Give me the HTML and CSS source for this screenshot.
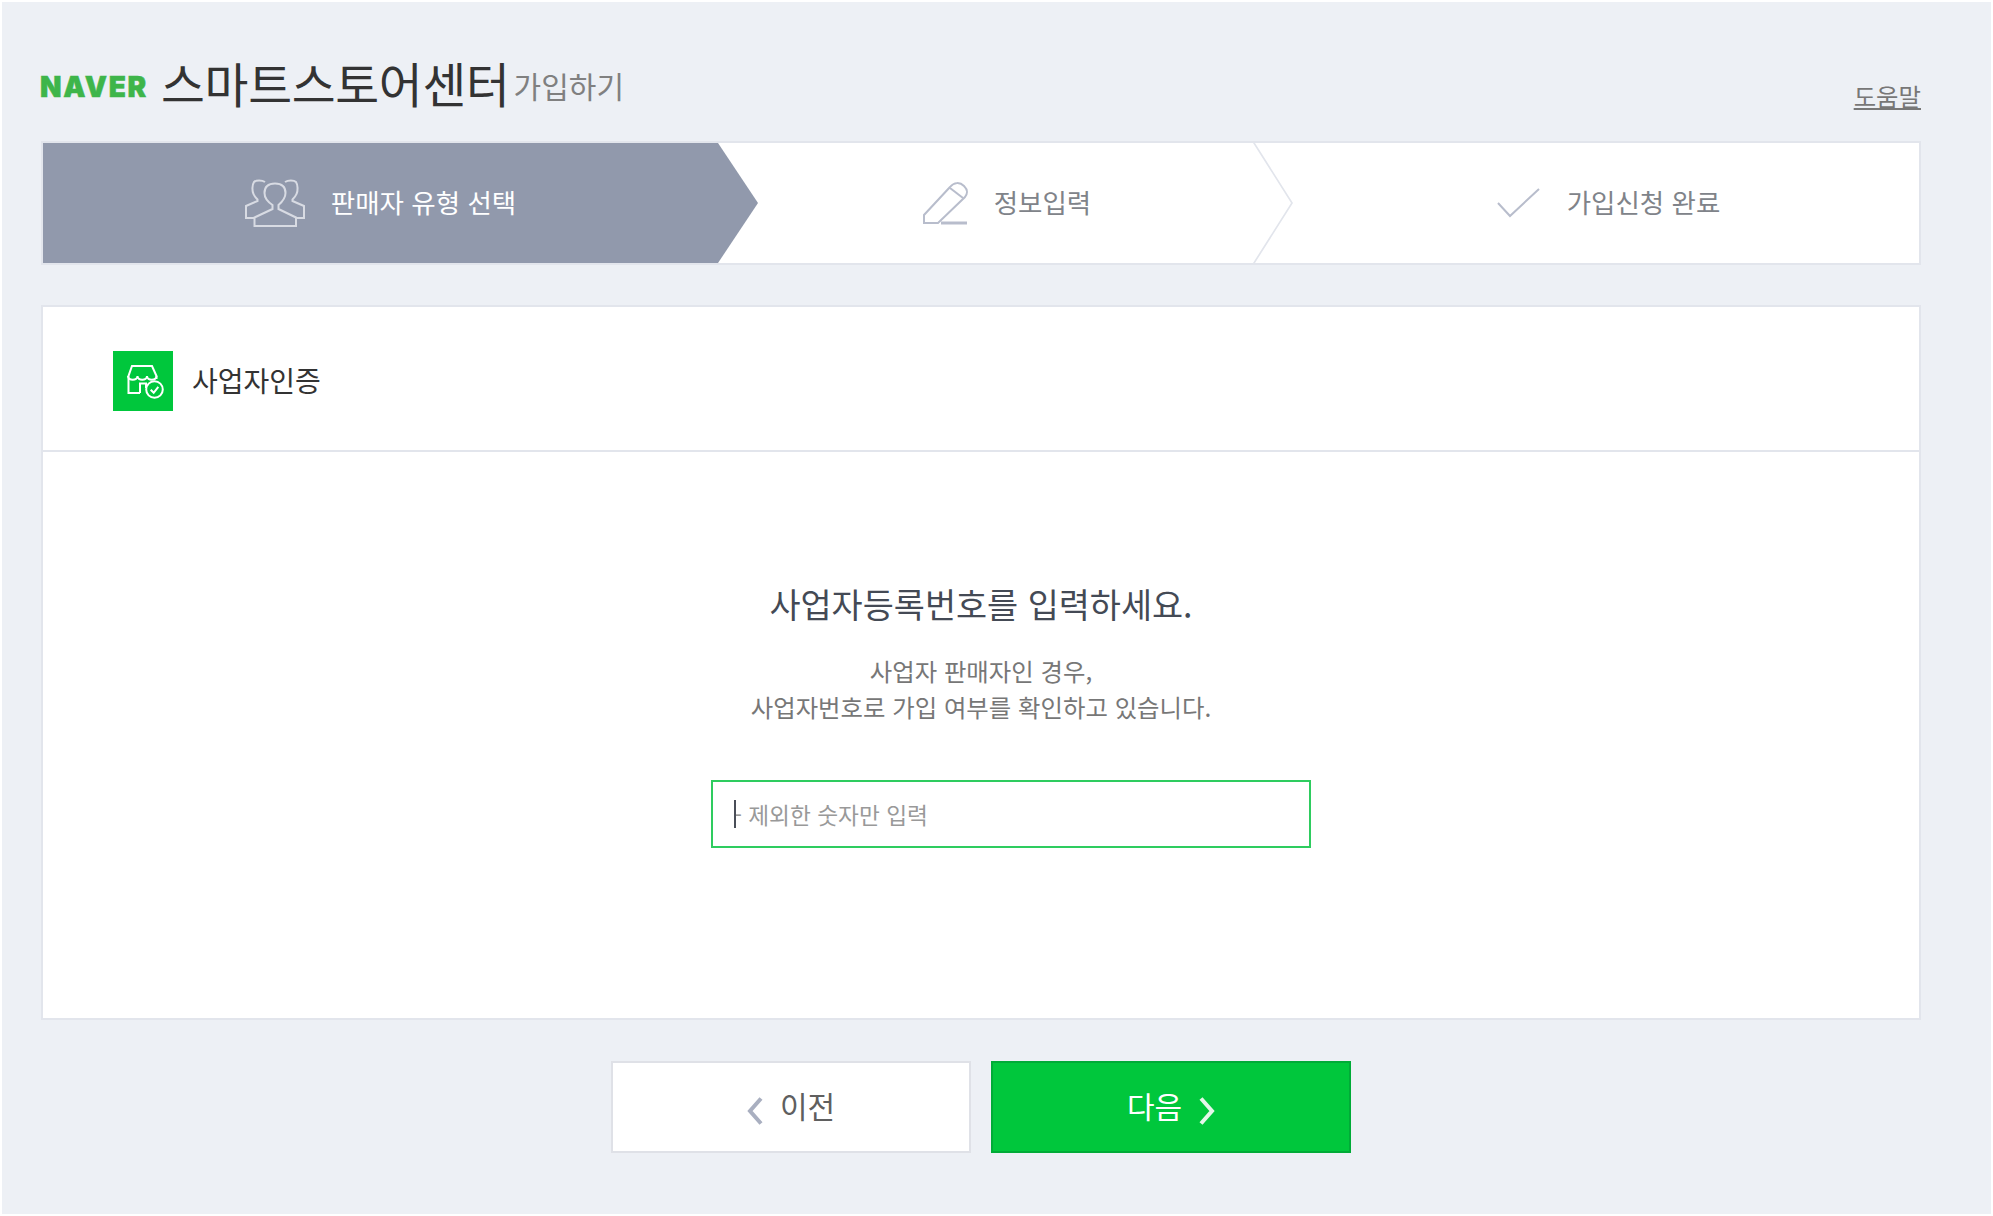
FILE: index.html
```html
<!DOCTYPE html>
<html lang="ko">
<head>
    <meta charset="UTF-8">
    <meta name="viewport" content="width=device-width, initial-scale=1.0">
    <title>네이버 스마트스토어센터 가입하기</title>
    <link rel="stylesheet" href="styles.css">
</head>
<body>
    <div class="page">
        <!-- 상단 타이틀 -->
        <header class="top">
            <div class="brand">
                <span class="naver">NAVER</span>
                <h1>스마트스토어센터</h1>
                <span class="join">가입하기</span>
            </div>
            <a class="help" href="#">도움말</a>
        </header>

        <!-- 가입 단계 -->
        <ol class="steps">
            <li class="step step-first active">
                <svg class="icon-people" viewBox="0 0 60 48" width="60" height="48">
                    <path d="M9.5 38.5 27.5 30V26C23 23 19.5 19 19.5 14 19.5 8 22 4.5 30 4.5S40.5 8 40.5 14C40.5 19 37 23 33.5 26V30L51 38.5V47H9.5Z"/>
                    <path d="M20 3C17 1 11 1 9 3 7 6 7 12 8.5 15 9.5 17.5 11 19 12.5 20.5V22L1 27V39H9.5"/>
                    <path d="M40 3C43 1 49 1 51 3 53 6 53 12 51.5 15 50.5 17.5 49 19 47.5 20.5V22L59 27V39H51"/>
                </svg>
                <span>판매자 유형 선택</span>
            </li>
            <li class="step step-second">
                <svg class="icon-pencil" viewBox="0 0 46 43" width="46" height="43">
                    <path d="M2 41V33L28 5C32 0 38 0 42 4 46 8 46 11 43 15L16 41Z"/>
                    <path d="M28 6 41 16"/>
                    <path class="thick" d="M19 41H45"/>
                </svg>
                <span>정보입력</span>
            </li>
            <li class="step step-third">
                <svg class="icon-check" viewBox="0 0 43 30" width="43" height="30">
                    <path d="M1 15 13 28 42 1"/>
                </svg>
                <span>가입신청 완료</span>
            </li>
        </ol>

        <!-- 사업자 인증 -->
        <section class="panel">
            <div class="panel-head">
                <span class="badge">
                    <svg viewBox="0 0 60 60" width="60" height="60">
                        <path d="M27 42H15.5V25L19 15H39L43.5 25V28"/>
                        <path d="M15 25C15 30 24.5 30 24.5 25 24.5 30 34 30 34 25 34 30 43.5 30 43.5 25"/>
                        <path d="M27 42V32.5H33V37"/>
                        <circle cx="41.5" cy="38.5" r="8.3"/>
                        <path d="M37.7 38.7 40.7 41.8 45.3 35.8"/>
                    </svg>
                </span>
                <h2>사업자인증</h2>
            </div>
            <div class="panel-body">
                <h3>사업자등록번호를 입력하세요.</h3>
                <p>사업자 판매자인 경우,<br>사업자번호로 가입 여부를 확인하고 있습니다.</p>
                <div class="field">
                    <input type="text" placeholder="- 제외한 숫자만 입력">
                    <i class="caret"></i>
                </div>
            </div>
        </section>

        <!-- 이전 / 다음 -->
        <div class="actions">
            <button class="btn btn-prev">
                <svg viewBox="0 0 16 28" width="16" height="28"><path d="M14 1.5 3 14 14 26.5"/></svg>
                이전
            </button>
            <button class="btn btn-next">
                다음
                <svg viewBox="0 0 16 28" width="16" height="28"><path d="M2 1.5 13 14 2 26.5"/></svg>
            </button>
        </div>
    </div>
</body>
</html>
```

FILE: styles.css
```css
/* 색상 */
:root {
    --bg: #edf0f5;
    --line: #e2e5ec;
    --green: #00c73c;
    --step-active: #9199ac;
    --icon: #b8bdcc;
}

* {
    box-sizing: border-box;
}

html,
body {
    margin: 0;
    padding: 0;
    background: #fff;
}

body {
    font-family: "Noto Sans CJK KR", "Noto Sans", sans-serif;
    color: #333;
}

.page {
    margin: 2px;
    height: 1212px;
    padding: 0 70px 0 39px;
    background: var(--bg);
}

/* 상단 타이틀 */
.top {
    height: 139px;
    display: flex;
    justify-content: space-between;
    align-items: flex-end;
}

.brand {
    display: flex;
    align-items: center;
    height: 56px;
    margin-bottom: 30px;
}

.naver {
    width: 116px;
    margin: 8px 0 0 -1px;
    font-family: Inter, sans-serif;
    font-size: 28px;
    font-weight: 900;
    letter-spacing: 1.7px;
    color: #3eb54a;
    -webkit-text-stroke: 0.5px #3eb54a;
}

.brand h1 {
    margin: 0 4px 0 5px;
    font-size: 47.7px;
    font-weight: 400;
    letter-spacing: -0.3px;
    line-height: 56px;
    color: #333;
}

.join {
    font-size: 30px;
    line-height: 40px;
    margin-top: 4px;
    color: #808080;
}

.help {
    margin-bottom: 31px;
    font-size: 24.4px;
    line-height: 28px;
    color: #777;
}

/* 가입 단계 */
.steps {
    display: flex;
    height: 124px;
    margin: 0;
    padding: 0;
    list-style: none;
    background: #fff;
    border: 2px solid var(--line);
}

.step {
    position: relative;
    display: flex;
    align-items: center;
    justify-content: center;
    font-size: 26.5px;
    color: #808389;
}

.step span {
    margin-bottom: 4px;
}

.step svg path {
    fill: none;
    stroke: var(--icon);
    stroke-width: 2;
}

.step-first {
    width: 675px;
    gap: 26px;
}

.step-second {
    width: 535px;
    padding-left: 42px;
    gap: 26px;
}

.step-third {
    flex: 1;
    padding-left: 45px;
    gap: 27px;
}

.active {
    background: var(--step-active);
    color: #fff;
}

.active::after {
    content: "";
    position: absolute;
    top: 0;
    left: 100%;
    border-left: 40px solid var(--step-active);
    border-top: 60px solid transparent;
    border-bottom: 60px solid transparent;
}

.step svg.icon-people path {
    stroke: #d8dbe3;
}

.step svg path.thick {
    stroke-width: 3;
}

/* 단계 구분 화살표 */
.step-second::after {
    content: "";
    position: absolute;
    top: 0;
    right: -40px;
    width: 40px;
    height: 120px;
    background: var(--line);
    clip-path: polygon(0 0, 2px 0, 100% 50%, 2px 100%, 0 100%, calc(100% - 2px) 50%);
}

/* 패널 */
.panel {
    height: 715px;
    margin-top: 40px;
    background: #fff;
    border: 2px solid var(--line);
}

.panel-head {
    display: flex;
    align-items: center;
    gap: 19px;
    height: 145px;
    padding: 5px 0 0 70px;
    border-bottom: 2px solid var(--line);
}

.badge {
    display: block;
    width: 60px;
    height: 60px;
    background: var(--green);
}

.badge svg {
    display: block;
    fill: none;
    stroke: #fff;
    stroke-width: 2;
}

.panel-head h2 {
    margin: 0 0 3px;
    font-size: 28px;
    font-weight: 400;
    color: #333;
}

.panel-body {
    display: flex;
    flex-direction: column;
    align-items: center;
    padding-top: 132px;
    text-align: center;
}

.panel-body h3 {
    margin: 0;
    font-size: 33.8px;
    font-weight: 400;
    line-height: 40px;
    color: #444a55;
}

.panel-body p {
    margin: 29px 0 55px;
    font-size: 24.4px;
    line-height: 36px;
    color: #777;
}

.field {
    position: relative;
    width: 600px;
    height: 68px;
    margin-left: 60px;
}

.field input {
    display: block;
    width: 100%;
    height: 100%;
    padding: 0 21px;
    font: inherit;
    font-size: 22.7px;
    border: 2px solid #2ecc5f;
    border-radius: 0;
    outline: none;
    background: #fff;
}

.field input::placeholder {
    color: #999;
    opacity: 1;
}

.caret {
    position: absolute;
    top: 20px;
    left: 23px;
    width: 2px;
    height: 28px;
    background: #4a4e58;
}

/* 버튼 */
.actions {
    display: flex;
    justify-content: center;
    gap: 20px;
    margin-top: 41px;
}

.btn {
    display: flex;
    align-items: center;
    justify-content: center;
    gap: 17px;
    width: 360px;
    height: 92px;
    padding: 0 0 5px;
    font: inherit;
    font-size: 30px;
    border-radius: 0;
    cursor: pointer;
}

.btn svg {
    margin-top: 12px;
    fill: none;
    stroke-width: 4;
}

.btn-prev {
    background: #fff;
    border: 2px solid #dfe1e7;
    color: #5f5f5f;
}

.btn-prev svg {
    stroke: #a9afc0;
}

.btn-next {
    background: var(--green);
    border: 2px solid #00ab37;
    color: #fff;
}

.btn-next svg {
    stroke: #e4f7ea;
}
```
